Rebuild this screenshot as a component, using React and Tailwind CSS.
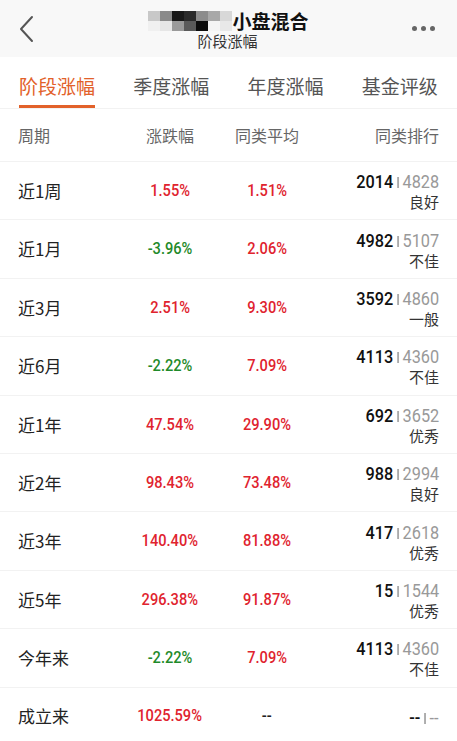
import React from "react";

const rows = [
  { p: "近1周", a: "1.55%", b: "1.51%", r1: "2014", r2: "4828", lv: "良好" },
  { p: "近1月", a: "-3.96%", b: "2.06%", r1: "4982", r2: "5107", lv: "不佳" },
  { p: "近3月", a: "2.51%", b: "9.30%", r1: "3592", r2: "4860", lv: "一般" },
  { p: "近6月", a: "-2.22%", b: "7.09%", r1: "4113", r2: "4360", lv: "不佳" },
  { p: "近1年", a: "47.54%", b: "29.90%", r1: "692", r2: "3652", lv: "优秀" },
  { p: "近2年", a: "98.43%", b: "73.48%", r1: "988", r2: "2994", lv: "良好" },
  { p: "近3年", a: "140.40%", b: "81.88%", r1: "417", r2: "2618", lv: "优秀" },
  { p: "近5年", a: "296.38%", b: "91.87%", r1: "15", r2: "1544", lv: "优秀" },
  { p: "今年来", a: "-2.22%", b: "7.09%", r1: "4113", r2: "4360", lv: "不佳" },
  { p: "成立来", a: "1025.59%", b: "--", r1: "--", r2: "--", lv: "" },
];

const cjk = { fontFamily: '"Noto Sans CJK SC", "Noto Sans", sans-serif' };
const num = { fontFamily: 'Roboto, "Noto Sans", sans-serif' };

function color(v) {
  if (v === "--") return "text-[#222]";
  return v.startsWith("-") ? "text-[#1f8a2a]" : "text-[#e0232e]";
}

const blur = [
  ["#c8c8c8", "#8a8a8a", "#181818", "#2a2a2a", "#8c8c8c", "#a8a8a8", "#d8d8d8"],
  ["#f0f0f0", "#e6e6e6", "#9a9a9a", "#5a5a5a", "#0c0c0c", "#f4f4f4", "#e8e8e8"],
];

export default function App() {
  return (
    <div className="w-[457px] h-[741px] overflow-hidden bg-white" style={cjk}>
      {/* header */}
      <div className="h-[57px] bg-[#f8f8f8] flex items-center relative">
        <div className="w-[54px] flex justify-center">
          <svg width="16" height="28" viewBox="0 0 16 28">
            <path d="M13 2 L2 14 L13 26" fill="none" stroke="#555" strokeWidth="2" strokeLinecap="round" strokeLinejoin="round" />
          </svg>
        </div>
        <div className="flex-1 flex flex-col items-center">
          <div className="flex items-center h-[23px] mt-[2px]">
            <div className="flex flex-col">
              {blur.map((r, i) => (
                <div key={i} className="flex">
                  {r.map((c, j) => (
                    <div key={j} className="w-[12px] h-[10px]" style={{ background: c }} />
                  ))}
                </div>
              ))}
            </div>
            <span className="text-[19px] font-bold text-[#111] leading-none">小盘混合</span>
          </div>
          <div className="text-[15px] leading-[18px] text-[#333] ml-[-2px]">阶段涨幅</div>
        </div>
        <div className="w-[54px] flex justify-start gap-[4px] pl-[9px]">
          <span className="w-[5px] h-[5px] rounded-full bg-[#666]" />
          <span className="w-[5px] h-[5px] rounded-full bg-[#666]" />
          <span className="w-[5px] h-[5px] rounded-full bg-[#666]" />
        </div>
      </div>

      {/* tabs */}
      <div className="h-[52px] flex border-b border-[#f2f2f2]">
        {["阶段涨幅", "季度涨幅", "年度涨幅", "基金评级"].map((t, i) => (
          <div key={t} className="flex-1 flex justify-center items-end">
            <div
              className={
                "text-[19px] leading-none pb-[10px] " +
                (i === 0 ? "text-[#e2612a] border-b-[3px] border-[#e2612a]" : "text-[#555] border-b-[3px] border-transparent")
              }
            >
              {t}
            </div>
          </div>
        ))}
      </div>

      {/* table header */}
      <div className="h-[53px] flex items-center px-[18px] border-b border-[#f2f2f2] text-[16px] text-[#666]">
        <div className="w-[102px]">周期</div>
        <div className="w-[100px] text-center">涨跌幅</div>
        <div className="w-[94px] text-center">同类平均</div>
        <div className="flex-1 text-right">同类排行</div>
      </div>

      {rows.map((r) => (
        <div key={r.p} className="h-[58.4px] flex items-center px-[18px] border-b border-[#f2f2f2]">
          <div className="w-[102px] text-[17px] text-[#222]">{r.p}</div>
          <div className="w-[100px] flex justify-center">
            <span className={"inline-block scale-x-[0.86] origin-center text-[17px] font-medium " + color(r.a)} style={num}>{r.a}</span>
          </div>
          <div className="w-[94px] flex justify-center">
            <span className={"inline-block scale-x-[0.86] origin-center text-[17px] font-medium " + color(r.b)} style={num}>{r.b}</span>
          </div>
          <div className="flex-1 flex flex-col items-end pt-[4px]">
            <div className="flex items-center text-[17.5px] leading-[19px] scale-x-[0.93] origin-right" style={num}>
              <span className="text-[#111] font-medium">{r.r1}</span>
              <span className="mx-[4px] w-[2px] h-[11px] bg-[#aaa]" />
              <span className="text-[#999]">{r.r2}</span>
            </div>
            {r.lv && <div className="text-[15px] leading-[20px] text-[#333]">{r.lv}</div>}
          </div>
        </div>
      ))}
    </div>
  );
}
